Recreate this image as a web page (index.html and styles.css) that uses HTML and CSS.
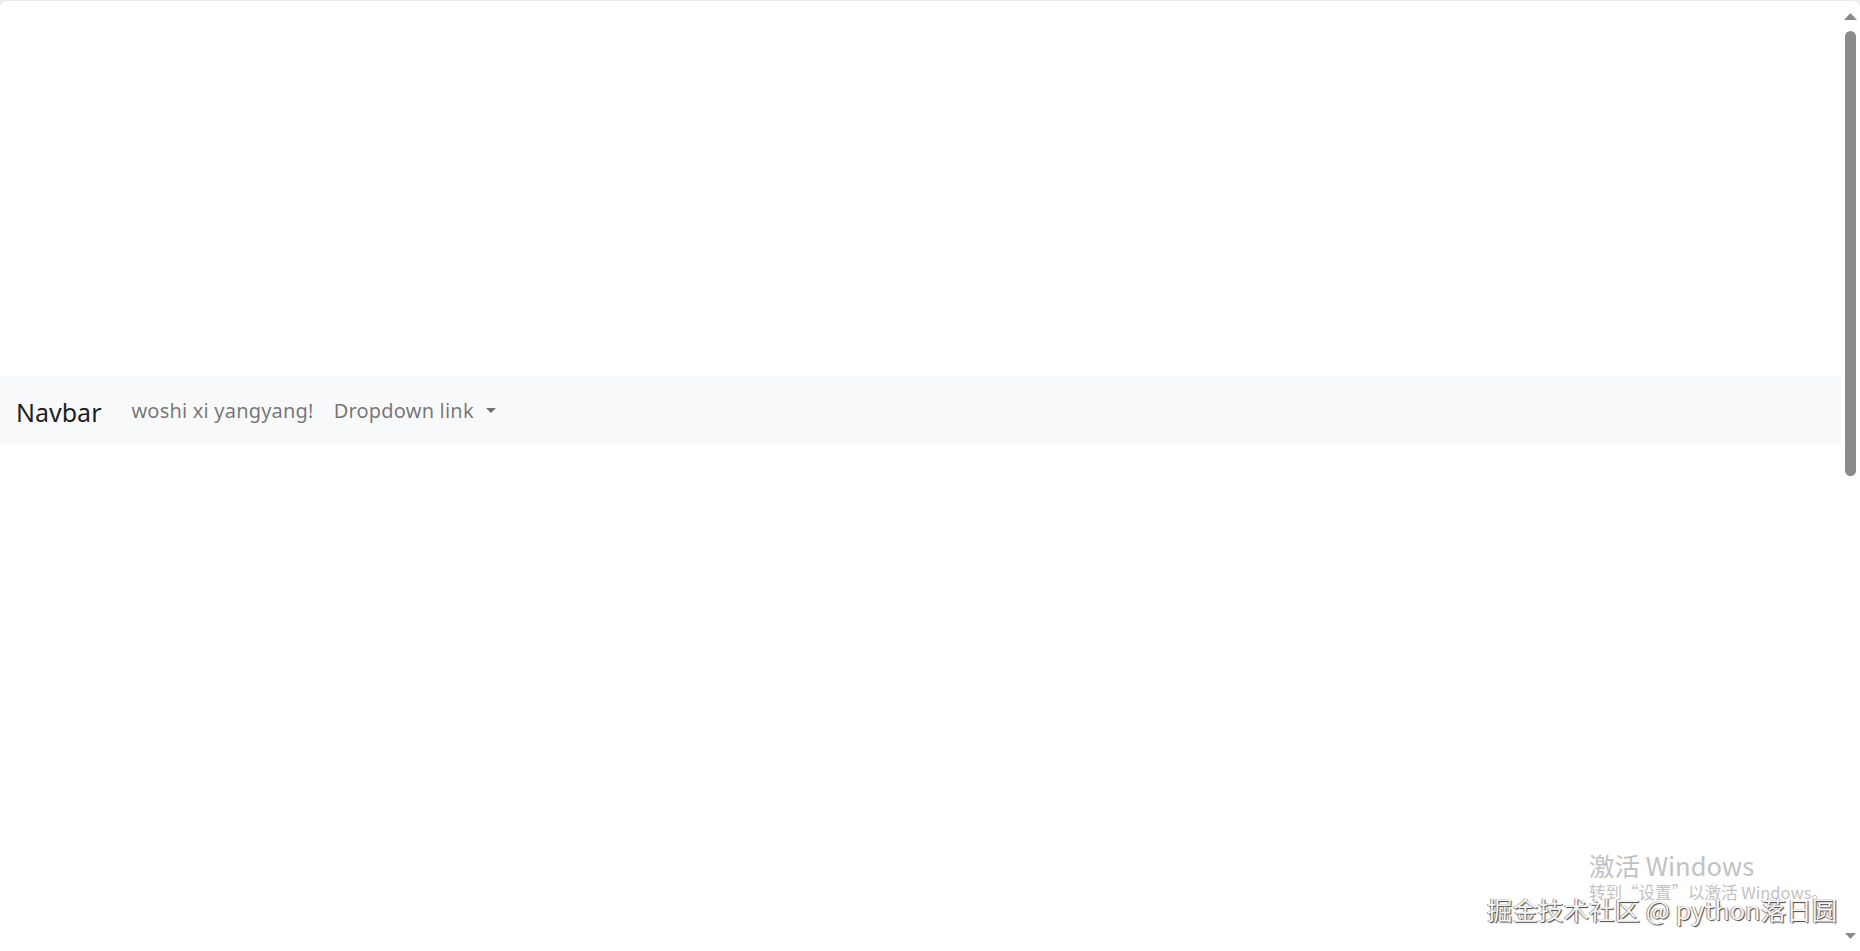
FILE: index.html
```html
<!DOCTYPE html>
<html lang="zh">
<head>
<meta charset="utf-8">
<title>Navbar</title>
<link rel="stylesheet" href="styles.css">
</head>
<body>
<div class="window">
  <main class="page">
    <div class="spacer"></div>
    <nav class="navbar">
      <a class="brand" href="#">Navbar</a>
      <ul class="nav">
        <li><a class="nav-link" href="#">woshi xi yangyang!</a></li>
        <li><a class="nav-link dropdown" href="#">Dropdown link<span class="caret"></span></a></li>
      </ul>
    </nav>
  </main>
  <div class="scrollbar">
    <svg class="arrow" width="13" height="7" viewBox="0 0 13 7"><polygon points="6.5,0 13,7 0,7" fill="#8a8a8a"/></svg>
    <div class="track"><div class="thumb"></div></div>
    <svg class="arrow" width="11" height="6" viewBox="0 0 11 6"><polygon points="0,0 11,0 5.5,6" fill="#8a8a8a"/></svg>
  </div>
</div>
<div class="activate">
  <div class="act-title">激活 Windows</div>
  <div class="act-sub">转到“设置”以激活 Windows。</div>
</div>
<div class="juejin">掘金技术社区 @ python落日圆</div>
</body>
</html>
```
FILE: styles.css
```css
html, body {
  margin: 0;
  padding: 0;
  height: 100%;
  overflow: hidden;
  background: #ececec;
}
body {
  font-family: "Noto Sans", "Noto Sans CJK SC", sans-serif;
}
.window {
  display: flex;
  height: 950px;
  margin-top: 1px;
  background: #ffffff;
  border-radius: 7px 7px 0 0;
  overflow: hidden;
}
.page {
  flex: 1;
  display: flex;
  flex-direction: column;
}
.spacer {
  height: 375px;
}
.navbar {
  height: 69px;
  background: #f8f9fa;
  display: flex;
  align-items: center;
  padding-left: 16px;
}
.brand {
  font-size: 25px;
  color: rgba(0, 0, 0, 0.9);
  text-decoration: none;
  margin-right: 20px;
  position: relative;
  top: 1px;
}
.nav {
  list-style: none;
  margin: 0;
  padding: 0;
  display: flex;
}
.nav-link {
  display: flex;
  align-items: center;
  padding: 0 10px;
  font-size: 20px;
  letter-spacing: 0.2px;
  color: rgba(0, 0, 0, 0.55);
  text-decoration: none;
}
.caret {
  display: inline-block;
  width: 0;
  height: 0;
  margin-left: 12px;
  border-left: 5px solid transparent;
  border-right: 5px solid transparent;
  border-top: 5px solid rgba(0, 0, 0, 0.55);
}
.scrollbar {
  width: 19px;
  display: flex;
  flex-direction: column;
  align-items: center;
  padding-top: 12px;
  padding-bottom: 12px;
  box-sizing: border-box;
}
.track {
  flex: 1;
  width: 11px;
  padding-top: 11px;
}
.thumb {
  height: 445px;
  width: 11px;
  border-radius: 6px;
  background: #8b8b8b;
}
.activate {
  position: absolute;
  left: 1589px;
  top: 849px;
  color: #c2c2c2;
  font-family: "Noto Sans CJK SC", sans-serif;
}
.act-title {
  font-size: 25.5px;
  line-height: 32px;
}
.act-sub {
  font-size: 16.5px;
  line-height: 22px;
}
.juejin {
  position: absolute;
  left: 1487px;
  top: 892px;
  font-size: 25.5px;
  line-height: 34px;
  font-family: "Noto Sans CJK SC", sans-serif;
  color: #f4f4f4;
  text-shadow: 1px 1px 1px #444, -1px 0 0 #999;
}
```
